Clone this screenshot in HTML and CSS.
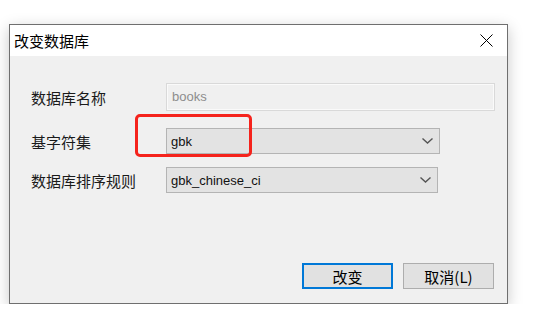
FILE: index.html
```html
<!DOCTYPE html>
<html lang="zh-CN">
<head>
    <meta charset="UTF-8">
    <meta name="viewport" content="width=device-width, initial-scale=1.0">
    <title>改变数据库</title>
    <link rel="stylesheet" href="styles.css">
</head>
<body>
    <div class="dialog">
        <div class="title-bar">
            <span class="title">改变数据库</span>
            <span class="close">
                <svg width="13" height="13" viewBox="0 0 13 13">
                    <path d="M0.5 0.5 L12.5 12.5 M12.5 0.5 L0.5 12.5" stroke="#000" stroke-width="1" fill="none"/>
                </svg>
            </span>
        </div>
        <div class="content">
            <div class="row row-name">
                <label>数据库名称</label>
                <div class="textbox">books</div>
            </div>
            <div class="row row-charset">
                <label>基字符集</label>
                <div class="combo combo-charset">
                    <span>gbk</span>
                    <svg class="chevron" width="11" height="6" viewBox="0 0 11 6">
                        <path d="M0.5 0.5 L5.5 5 L10.5 0.5" stroke="#555" stroke-width="1.4" fill="none"/>
                    </svg>
                </div>
            </div>
            <div class="row row-collation">
                <label>数据库排序规则</label>
                <div class="combo combo-collation">
                    <span>gbk_chinese_ci</span>
                    <svg class="chevron" width="11" height="6" viewBox="0 0 11 6">
                        <path d="M0.5 0.5 L5.5 5 L10.5 0.5" stroke="#555" stroke-width="1.4" fill="none"/>
                    </svg>
                </div>
            </div>
            <div class="buttons">
                <button class="btn btn-default">改变</button>
                <button class="btn">取消(L)</button>
            </div>
            <!-- 红框标注 -->
            <div class="highlight"></div>
        </div>
    </div>
</body>
</html>
```

FILE: styles.css
```css
body {
    margin: 0;
    background-color: #fff;
    font-family: "Noto Sans CJK SC", sans-serif;
}
.dialog {
    margin: 24px 0 0 9px;
    width: 497px;
    height: 278px;
    border: 1px solid #6f6f6f;
    background-color: #f0f0f0;
    box-shadow: 0 4px 14px rgba(0, 0, 0, 0.22);
    display: flex;
    flex-direction: column;
}
.title-bar {
    height: 31px;
    background-color: #fff;
    display: flex;
    align-items: center;
    justify-content: space-between;
    padding-left: 4px;
}
.title {
    font-size: 15px;
    color: #000;
}
.close {
    display: flex;
    margin-right: 14px;
}
.content {
    position: relative;
    flex: 1;
    padding: 27px 0 0 21px;
}
.row {
    display: flex;
    align-items: center;
}
.row label {
    width: 135px;
    font-size: 15px;
    color: #1a1a1a;
}
.row-charset {
    margin-top: 17px;
}
.row-collation {
    margin-top: 13px;
}
.textbox {
    width: 322px;
    height: 26px;
    border: 1px solid #d9d9d9;
    box-shadow: inset 0 0 0 1px #fafafa;
    padding-left: 5px;
    font-family: "Liberation Sans", sans-serif;
    font-size: 13px;
    line-height: 26px;
    color: #8d8d8d;
}
.combo {
    height: 24px;
    border: 1px solid #b4b4b4;
    background-color: #e3e3e3;
    display: flex;
    align-items: center;
    justify-content: space-between;
    padding: 0 6px 0 4px;
    font-family: "Liberation Sans", sans-serif;
    font-size: 13px;
    color: #111;
}
.combo-charset {
    width: 262px;
}
.combo-collation {
    width: 260px;
}
.buttons {
    display: flex;
    justify-content: flex-end;
    gap: 10px;
    margin-top: 70px;
    padding-right: 13px;
}
.btn {
    width: 91px;
    height: 26px;
    border: 1px solid #adadad;
    background-color: #e1e1e1;
    font-family: "Noto Sans CJK SC", sans-serif;
    font-size: 15px;
    color: #000;
    padding: 0;
}
.btn-default {
    border: 2px solid #0078d7;
}
.highlight {
    position: absolute;
    left: 125px;
    top: 58px;
    width: 111px;
    height: 37px;
    border: 3px solid #f5231c;
    border-radius: 5px;
}
```
